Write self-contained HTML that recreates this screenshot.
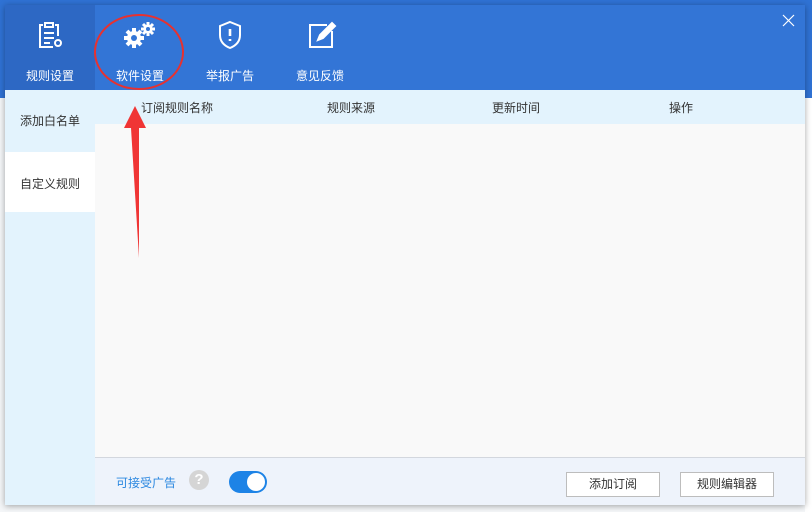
<!DOCTYPE html>
<html><head><meta charset="utf-8"><style>
*{margin:0;padding:0;box-sizing:border-box}
body{width:812px;height:512px;overflow:hidden;background:#f4f6f8;position:relative;font-family:"Liberation Sans","Noto Sans CJK SC",sans-serif;font-size:12px;color:#333}
.abs{position:absolute}
.dlg{left:5px;top:5px;width:800px;height:500px;background:#f9f9f9;box-shadow:0 1px 6px rgba(0,0,0,.35)}
.hd{left:0;top:0;width:800px;height:85px;background:#3375d6}
.tab{top:0;width:90px;height:85px;color:#fff;text-align:center;font-size:12px}
.tab span{position:absolute;left:0;right:0;top:62px}
.side{left:0;top:85px;width:90px;height:415px;background:#e3f3fd}
.th{left:90px;top:85px;width:710px;height:34px;background:#e3f3fd}
.ft{left:90px;top:452px;width:710px;height:48px;background:#eef3fb;border-top:1px solid #d3d7de}
.btn{top:14px;height:25px;border:1px solid #bdbdbd;background:#fff;font-size:12px;text-align:center;line-height:23px}
</style></head><body>
<div class="abs" style="left:0;top:0;width:812px;height:98px;background:#2f72d4"></div>
<div class="abs" style="left:805px;top:0;width:7px;height:512px;background:#fff"></div>
<div class="abs" style="left:805px;top:0;width:7px;height:98px;background:#2f72d4"></div>
<div class="dlg abs">
 <div class="hd abs"></div>
 <div class="tab abs" style="left:0;background:#2d68c4">
  <svg class="abs" style="left:32px;top:16px" width="28" height="30" viewBox="0 0 28 30" fill="none" stroke="#fff" stroke-width="2"><path d="M6 4h-3v22h13M18 4h3v11"/><rect x="8" y="2" width="8" height="4"/><path d="M7 12h10M7 17h10M7 22h6"/><circle cx="21" cy="22" r="3"/></svg>
  <span>规则设置</span></div>
 <div class="tab abs" style="left:90px">
  <svg class="abs" style="left:27px;top:16px" width="36" height="28" viewBox="0 0 36 28" fill="#fff"><circle cx="12" cy="17" r="7"/><g stroke="#fff" stroke-width="4"><path d="M12 7v20M2 17h20M5 10l14 14M19 10L5 24"/></g><circle cx="12" cy="17" r="3" fill="#3375d6"/><circle cx="26" cy="8" r="4.5"/><g stroke="#fff" stroke-width="3"><path d="M26 1v14M19 8h14M21 3l10 10M31 3L21 13"/></g><circle cx="26" cy="8" r="2" fill="#3375d6"/></svg>
  <span>软件设置</span></div>
 <div class="tab abs" style="left:180px">
  <svg class="abs" style="left:33px;top:15px" width="24" height="30" viewBox="0 0 24 30" fill="none" stroke="#fff" stroke-width="2"><path d="M12 2l10 4v9c0 7-5 11-10 13C7 26 2 22 2 15V6z"/><path d="M12 9v7M12 19v2" stroke-width="2.6"/></svg>
  <span>举报广告</span></div>
 <div class="tab abs" style="left:270px">
  <svg class="abs" style="left:32px;top:15px" width="30" height="30" viewBox="0 0 30 30" fill="none" stroke="#fff" stroke-width="2"><path d="M20 5H3v22h22V11"/><path d="M11 20l2-5L25 3l3 3-12 12z" fill="#fff"/></svg>
  <span>意见反馈</span></div>
 <svg class="abs" style="left:777px;top:9px" width="13" height="13" viewBox="0 0 13 13" stroke="#fff" stroke-width="1.2"><path d="M1 1l11 11M12 1L1 12"/></svg>
 <div class="side abs">
  <div class="abs" style="left:15px;top:22px">添加白名单</div>
  <div class="abs" style="left:0;top:62px;width:90px;height:60px;background:#fff"></div>
  <div class="abs" style="left:15px;top:85px">自定义规则</div>
 </div>
 <div class="th abs">
  <div class="abs" style="left:46px;top:9px">订阅规则名称</div>
  <div class="abs" style="left:232px;top:9px">规则来源</div>
  <div class="abs" style="left:397px;top:9px">更新时间</div>
  <div class="abs" style="left:574px;top:9px">操作</div>
 </div>
 <div class="ft abs">
  <div class="abs" style="left:21px;top:16px;color:#2a87e0">可接受广告</div>
  <div class="abs" style="left:94px;top:12px;width:20px;height:20px;border-radius:50%;background:#d5d5d5;color:#fff;font-weight:bold;font-size:15px;text-align:center;line-height:20px">?</div>
  <div class="abs" style="left:134px;top:13px;width:38px;height:22px;border-radius:11px;background:#1d83e6"><div class="abs" style="left:18px;top:2px;width:18px;height:18px;border-radius:50%;background:#fff"></div></div>
  <div class="btn abs" style="left:471px;width:94px">添加订阅</div>
  <div class="btn abs" style="left:585px;width:94px">规则编辑器</div>
 </div>
</div>
<svg class="abs" style="left:0;top:0" width="812" height="512">
 <ellipse cx="139" cy="52" rx="44" ry="37" fill="none" stroke="#e8312f" stroke-width="2"/>
 <path d="M139 258L131 128L124 128L135 106L146 128L139 128z" fill="#f03535"/>
</svg>
</body></html>
